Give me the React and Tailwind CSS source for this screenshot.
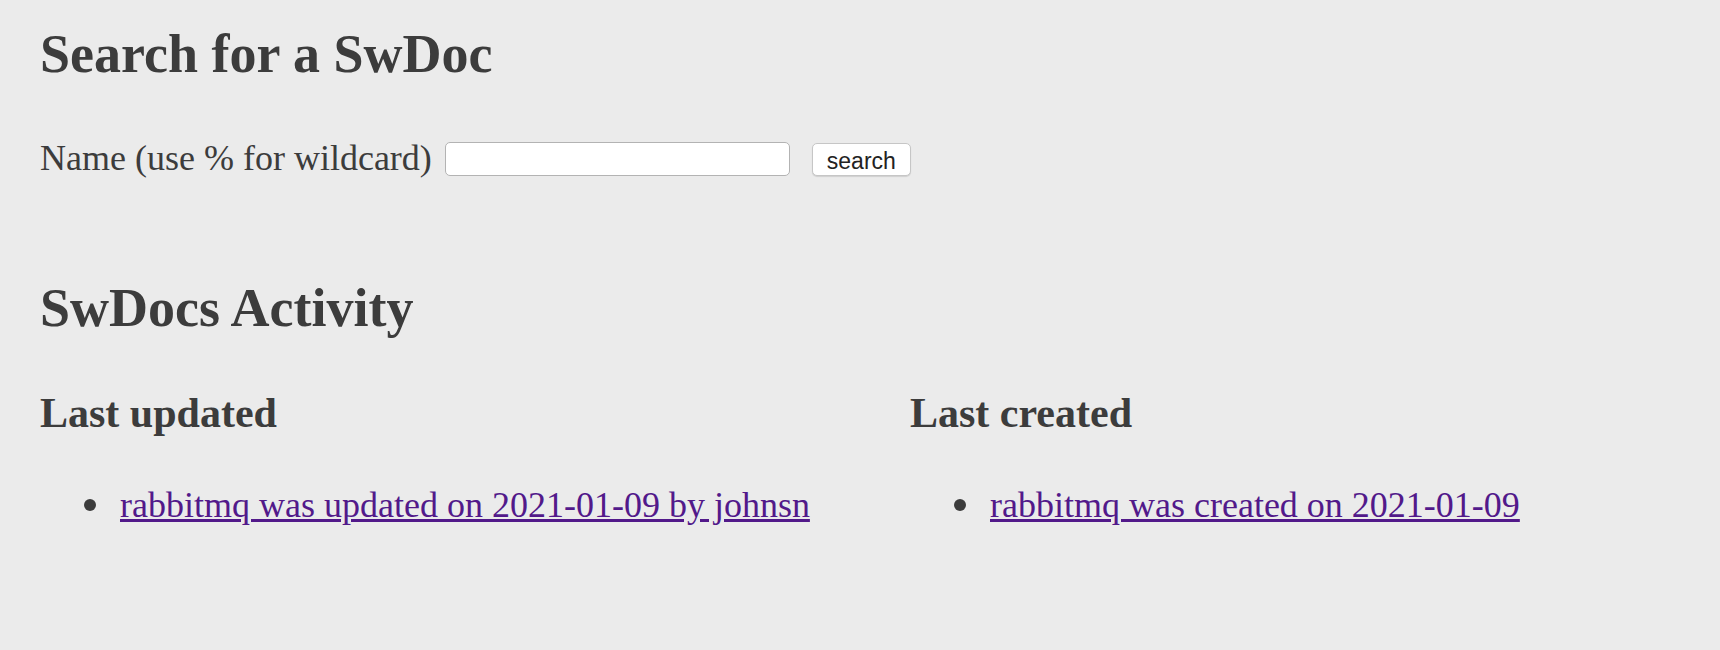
const serif = "font-['Liberation_Serif','Times_New_Roman',serif]";

const COLUMNS = [
  { title: 'Last updated', items: ['rabbitmq was updated on 2021-01-09 by johnsn'] },
  { title: 'Last created', items: ['rabbitmq was created on 2021-01-09'] },
];

function ActivityColumn({ title, items }) {
  return (
    <div>
      <h3 className="text-[42px] leading-[48px] font-bold">{title}</h3>
      <ul className="mt-[48px]">
        {items.map((item) => (
          <li key={item} className="flex items-start text-[36px] leading-[40px]">
            <span className="ml-[44px] mt-[14px] w-[12px] h-[12px] rounded-full bg-[#3c3c3c] shrink-0" />
            <a href="#" className="ml-[24px] text-[#52198a] underline">
              {item}
            </a>
          </li>
        ))}
      </ul>
    </div>
  );
}

export default function App() {
  return (
    <div className={`min-h-screen bg-[#ebebeb] text-[#3c3c3c] pl-[40px] pt-[23px] ${serif}`}>
      <h2 className="text-[54px] leading-[62px] font-bold">Search for a SwDoc</h2>

      <form className="flex items-start mt-[53px]" onSubmit={(e) => e.preventDefault()}>
        <label className="text-[36px] leading-[40px]">Name (use % for wildcard)</label>
        <input
          type="text"
          className="ml-[13px] mt-[4px] w-[345px] h-[34px] bg-white border border-[#b3b3b3] rounded-[5px] outline-none"
        />
        <button
          type="submit"
          className="ml-[22px] mt-[5px] w-[99px] h-[33px] pt-[3px] bg-white border border-[#c6c6c6] rounded-[5px] shadow-[0_1px_1px_rgba(0,0,0,0.12)] text-[23px] leading-none text-[#222] font-['Liberation_Sans',Arial,sans-serif]"
        >
          search
        </button>
      </form>

      <h2 className="mt-[99px] text-[54px] leading-[62px] font-bold">SwDocs Activity</h2>

      <div className="grid grid-cols-[870px_1fr] mt-[50px]">
        {COLUMNS.map((col) => (
          <ActivityColumn key={col.title} {...col} />
        ))}
      </div>
    </div>
  );
}
